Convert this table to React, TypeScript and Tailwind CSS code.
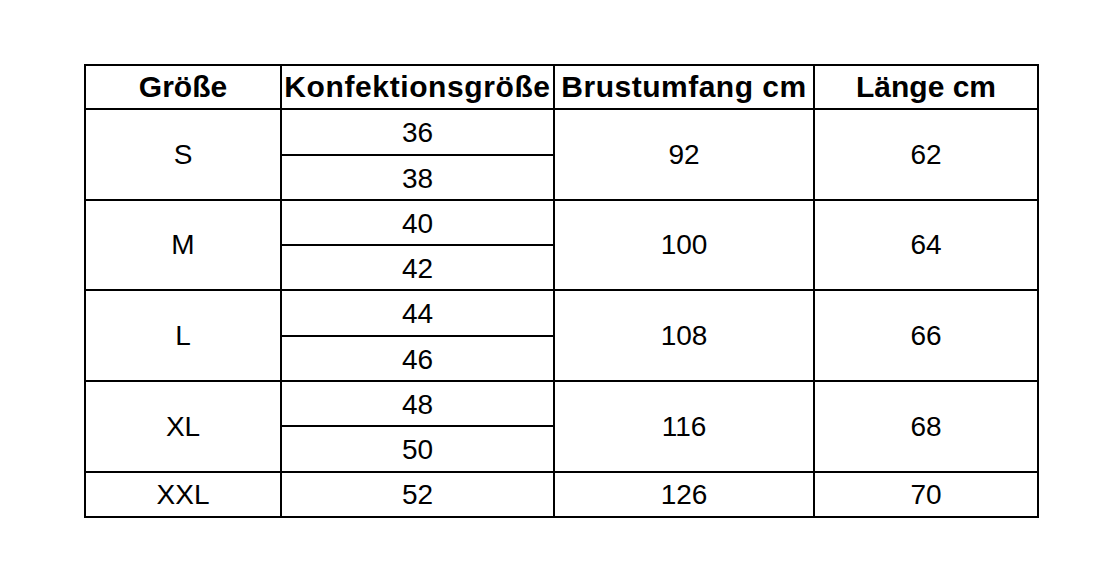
import { Fragment } from "react";

const groups = [
  { size: "S", konf: ["36", "38"], brust: "92", laenge: "62" },
  { size: "M", konf: ["40", "42"], brust: "100", laenge: "64" },
  { size: "L", konf: ["44", "46"], brust: "108", laenge: "66" },
  { size: "XL", konf: ["48", "50"], brust: "116", laenge: "68" },
];

function Cell({ children, className = "" }: { children: React.ReactNode; className?: string }) {
  return (
    <div className={`flex items-center justify-center bg-white text-[28px] leading-none text-black ${className}`}>
      {children}
    </div>
  );
}

export default function App() {
  return (
    <div
      className="min-h-[587px] w-full bg-white pl-[84px] pt-[64px]"
      style={{ fontFamily: '"Liberation Sans", Arial, sans-serif' }}
    >
      <div className="grid w-[955px] grid-cols-[194px_271px_258px_222px] grid-rows-[42px_44px_43px_43px_43px_44px_43px_43px_44px_43px] gap-[2px] bg-black p-[2px]">
        <Cell className="text-[30px] font-bold">Größe</Cell>
        <Cell className="text-[30px] font-bold tracking-[0.6px]">Konfektionsgröße</Cell>
        <Cell className="text-[30px] font-bold tracking-[0.5px]">Brustumfang cm</Cell>
        <Cell className="text-[30px] font-bold">Länge cm</Cell>

        {groups.map((g) => (
          <Fragment key={g.size}>
            <Cell className="row-span-2">{g.size}</Cell>
            <Cell className="pt-[2px]">{g.konf[0]}</Cell>
            <Cell className="row-span-2">{g.brust}</Cell>
            <Cell className="row-span-2">{g.laenge}</Cell>
            <Cell className="pt-[2px]">{g.konf[1]}</Cell>
          </Fragment>
        ))}

        <Cell>XXL</Cell>
        <Cell>52</Cell>
        <Cell>126</Cell>
        <Cell>70</Cell>
      </div>
    </div>
  );
}
